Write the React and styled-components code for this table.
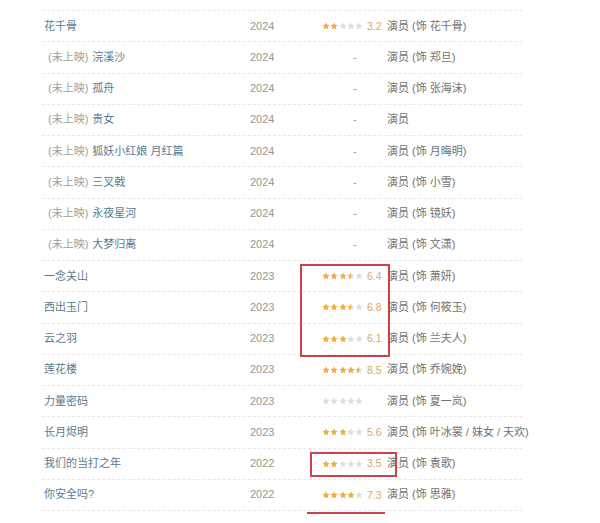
import React from "react";
import styled, { createGlobalStyle } from "styled-components";

const Global = createGlobalStyle`
  html, body { margin: 0; padding: 0; background: #fff; }
  body { font-family: "Liberation Sans", Arial, "Noto Sans CJK SC", sans-serif; }
`;

const Page = styled.div`
  position: relative;
  width: 600px;
  height: 523px;
  padding: 10px 0 0 42px;
  box-sizing: border-box;
  overflow: hidden;
  background: #fff;
`;

const Table = styled.div`
  width: 480px;
  border-top: 1px dashed #e6e6e6;
`;

const Row = styled.div`
  display: grid;
  grid-template-columns: 208px 56px 81px 1fr;
  align-items: center;
  height: 31.25px;
  box-sizing: border-box;
  border-bottom: 1px dashed #e6e6e6;
  font-size: 11px;
  line-height: 1;
`;

const TitleCell = styled.div`
  padding-left: ${(p) => (p.$upcoming ? "6px" : "2px")};
  white-space: nowrap;
`;

const Upcoming = styled.span`
  color: #a0a0a0;
  margin-right: 4px;
`;

const TitleLink = styled.span`
  color: #5b7a8f;
`;

const YearCell = styled.div`
  color: #969696;
`;

const RatingCell = styled.div`
  display: flex;
  align-items: center;
  padding-left: 16px;
`;

const Dash = styled.span`
  color: #a0a0a0;
  padding-left: 31px;
`;

const StarsBox = styled.span`
  position: relative;
  display: inline-flex;
  width: 41px;
  height: 8px;
`;

const StarLayer = styled.span`
  display: flex;
  gap: 0.25px;
  height: 8px;
  overflow: hidden;
  white-space: nowrap;
  ${(p) => p.$over && "position: absolute; left: 0; top: 0;"}
`;

const Score = styled.span`
  display: inline-block;
  width: 15px;
  margin-left: 4px;
  color: #d9a862;
  font-size: 10.5px;
`;

const RoleCell = styled.div`
  color: #727272;
  white-space: nowrap;
`;

const Mark = styled.div`
  position: absolute;
  border: 2px solid #c8444a;
  box-sizing: border-box;
  left: ${(p) => p.$x}px;
  top: ${(p) => p.$y}px;
  width: ${(p) => p.$w}px;
  height: ${(p) => p.$h}px;
`;

const Underline = styled.div`
  position: absolute;
  left: 307px;
  top: 512px;
  width: 78px;
  height: 2px;
  background: #c8444a;
`;

const StarSvg = ({ color }) => (
  <svg width="8" height="8" viewBox="0 0 24 24" style={{ flex: "none" }}>
    <path
      d="M12 1.5l3.2 6.9 7.3.8-5.5 5 1.6 7.3L12 17.8l-6.6 3.7 1.6-7.3-5.5-5 7.3-.8z"
      fill={color}
    />
  </svg>
);

const Stars = ({ value }) => (
  <StarsBox>
    <StarLayer>
      {[0, 1, 2, 3, 4].map((i) => (
        <StarSvg key={i} color="#dedede" />
      ))}
    </StarLayer>
    <StarLayer $over style={{ width: `${(value / 5) * 41}px` }}>
      {[0, 1, 2, 3, 4].map((i) => (
        <StarSvg key={i} color="#f2ad3c" />
      ))}
    </StarLayer>
  </StarsBox>
);

const rows = [
  { title: "花千骨", year: 2024, stars: 2, score: "3.2", role: "演员 (饰 花千骨)" },
  { up: true, title: "浣溪沙", year: 2024, role: "演员 (饰 郑旦)" },
  { up: true, title: "孤舟", year: 2024, role: "演员 (饰 张海沫)" },
  { up: true, title: "贵女", year: 2024, role: "演员" },
  { up: true, title: "狐妖小红娘 月红篇", year: 2024, role: "演员 (饰 月晦明)" },
  { up: true, title: "三叉戟", year: 2024, role: "演员 (饰 小雪)" },
  { up: true, title: "永夜星河", year: 2024, role: "演员 (饰 镜妖)" },
  { up: true, title: "大梦归离", year: 2024, role: "演员 (饰 文潇)" },
  { title: "一念关山", year: 2023, stars: 3.5, score: "6.4", role: "演员 (饰 萧妍)" },
  { title: "西出玉门", year: 2023, stars: 3.5, score: "6.8", role: "演员 (饰 何筱玉)" },
  { title: "云之羽", year: 2023, stars: 3, score: "6.1", role: "演员 (饰 兰夫人)" },
  { title: "莲花楼", year: 2023, stars: 4.5, score: "8.5", role: "演员 (饰 乔婉娩)" },
  { title: "力量密码", year: 2023, stars: 0, score: "", role: "演员 (饰 夏一岚)" },
  { title: "长月烬明", year: 2023, stars: 3, score: "5.6", role: "演员 (饰 叶冰裳 / 妹女 / 天欢)" },
  { title: "我们的当打之年", year: 2022, stars: 2, score: "3.5", role: "演员 (饰 袁歌)" },
  { title: "你安全吗?", year: 2022, stars: 4, score: "7.3", role: "演员 (饰 思雅)" },
];

export default function App() {
  return (
    <>
      <Global />
      <Page>
        <Table>
          {rows.map((r, i) => (
            <Row key={i}>
              <TitleCell $upcoming={r.up}>
                {r.up && <Upcoming>(未上映)</Upcoming>}
                <TitleLink>{r.title}</TitleLink>
              </TitleCell>
              <YearCell>{r.year}</YearCell>
              <RatingCell>
                {r.up ? (
                  <Dash>-</Dash>
                ) : (
                  <>
                    <Stars value={r.stars} />
                    <Score>{r.score}</Score>
                  </>
                )}
              </RatingCell>
              <RoleCell>{r.role}</RoleCell>
            </Row>
          ))}
        </Table>
        <Mark $x={300} $y={264} $w={90} $h={93} />
        <Mark $x={310} $y={452} $w={87} $h={25} />
        <Underline />
      </Page>
    </>
  );
}
